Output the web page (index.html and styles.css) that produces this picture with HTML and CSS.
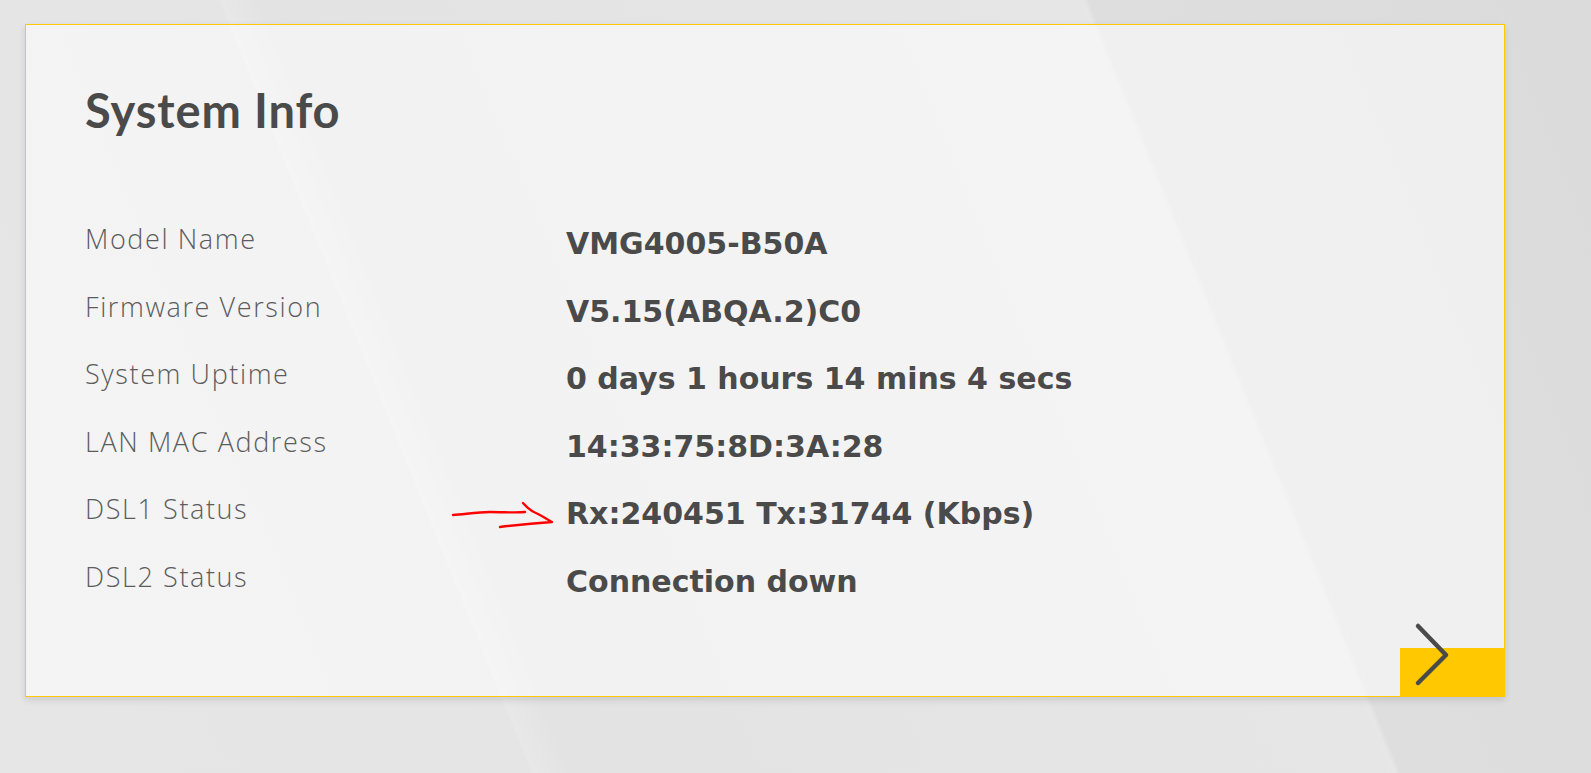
FILE: index.html
```html
<!DOCTYPE html>
<html lang="en">
<head>
<meta charset="utf-8">
<title>System Info</title>
<link rel="stylesheet" href="styles.css">
</head>
<body>
<main class="page">
  <section class="card">
    <h1 class="card-title">System Info</h1>
    <dl class="info">
      <div class="info-row"><dt>Model Name</dt><dd>VMG4005-B50A</dd></div>
      <div class="info-row"><dt>Firmware Version</dt><dd>V5.15(ABQA.2)C0</dd></div>
      <div class="info-row"><dt>System Uptime</dt><dd>0 days 1 hours 14 mins 4 secs</dd></div>
      <div class="info-row"><dt>LAN MAC Address</dt><dd>14:33:75:8D:3A:28</dd></div>
      <div class="info-row"><dt>DSL1 Status</dt><dd>Rx:240451 Tx:31744 (Kbps)</dd></div>
      <div class="info-row"><dt>DSL2 Status</dt><dd>Connection down</dd></div>
    </dl>
    <svg class="annot" width="110" height="30" viewBox="0 0 110 30" aria-hidden="true">
      <path d="M7 15 C 20 14, 32 12, 44 12 C 58 12, 70 13, 79 12" fill="none" stroke="#ff0000" stroke-width="2.4" stroke-linecap="round"/>
      <path d="M77 3 C 80 6, 82 10, 92 14 C 98 17, 102 20, 106 22 C 90 23, 70 25, 54 27" fill="none" stroke="#ff0000" stroke-width="2.4" stroke-linecap="round" stroke-linejoin="round"/>
    </svg>
    <a class="next-btn" href="#" aria-label="More">
      <svg class="next-icon" width="36" height="65" viewBox="0 0 36 65" aria-hidden="true">
        <path d="M4 4 L32 33 L4 61" fill="none" stroke="#4a4a4a" stroke-width="4.5" stroke-linecap="round" stroke-linejoin="round"/>
      </svg>
    </a>
  </section>
</main>
</body>
</html>
```

FILE: styles.css
```css
html, body {
  margin: 0;
  padding: 0;
}

body {
  min-height: 100vh;
  background-color: #e4e4e4;
  background-image: linear-gradient(68deg,
    #e6e6e6 0%,
    #e5e5e5 27.9%,
    #e8e8e8 28%,
    #e3e3e3 30%,
    #e6e6e6 73%,
    #e7e7e7 73.3%,
    #dedede 73.6%,
    #dbdbdb 100%);
  background-attachment: fixed;
  font-family: "DejaVu Sans", sans-serif;
  color: #4a4a4a;
}

.page {
  padding: 24px 0 0 25px;
}

.card {
  position: relative;
  box-sizing: border-box;
  width: 1480px;
  height: 673px;
  border: 1px solid #ffc800;
  background: rgba(255, 255, 255, 0.55);
  box-shadow: 0 3px 7px rgba(0, 0, 0, 0.12);
  padding: 62px 0 0 59px;
}

.card-title {
  margin: 0;
  font-family: "Lato", sans-serif;
  font-weight: 700;
  font-size: 47px;
  line-height: 46px;
  letter-spacing: 0.9px;
  color: #4a4a4a;
}

.info {
  margin: 94px 0 0;
}

.info-row {
  display: grid;
  grid-template-columns: 481px auto;
  align-items: start;
  height: 67.6px;
}

.info-row dt {
  margin: 0;
  padding-top: 1px;
  font-family: "Open Sans", sans-serif;
  font-weight: 300;
  font-size: 27px;
  line-height: 22px;
  letter-spacing: 1.6px;
  color: #5c5c5c;
}

.info-row dd {
  margin: 0;
  font-family: "DejaVu Sans", sans-serif;
  font-weight: 700;
  font-size: 30px;
  line-height: 34px;
  color: #4a4a4a;
}

.annot {
  position: absolute;
  left: 420px;
  top: 475px;
  overflow: visible;
}

.next-btn {
  position: absolute;
  right: -1px;
  bottom: -1px;
  width: 105px;
  height: 49px;
  background: #ffc800;
}

.next-icon {
  position: absolute;
  left: 14px;
  top: -26px;
  overflow: visible;
}
```
